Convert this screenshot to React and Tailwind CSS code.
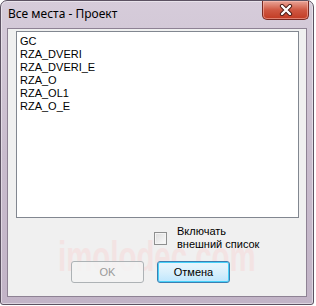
export default function App() {
  const items = ["GC", "RZA_DVERI", "RZA_DVERI_E", "RZA_O", "RZA_OL1", "RZA_O_E"];
  const ms = { fontFamily: '"Liberation Sans", Arial, sans-serif' };
  return (
    <div className="w-[316px] h-[306px] bg-white relative overflow-hidden">
      <div className="w-[314px] h-[305px] rounded-t-[7px] rounded-b-[3px] border border-[#5c5262] bg-linear-to-b from-[#d6ccda] via-[#c9bccd] to-[#c2b4c7] flex flex-col shadow-[inset_0_0_0_1px_rgba(255,255,255,0.45)]">
        <div className="h-[27px] flex justify-between items-start shrink-0">
          <div
            className="pl-[7px] pt-[5px] text-[12px] leading-[15px] text-black"
            style={{ fontFamily: '"Noto Sans", "Open Sans", sans-serif' }}
          >
            Все места - Проект
          </div>
          <div className="mr-[4px] w-[47px] h-[19px] rounded-b-[5px] border border-t-0 border-[#7a2a22] bg-linear-to-b from-[#e8a497] via-[#cf5742] to-[#c23a22] flex items-center justify-center shadow-[inset_0_0_0_1px_rgba(255,200,190,0.5)]">
            <svg width="14" height="12" viewBox="0 0 14 12">
              <path d="M3 2 L11 10 M11 2 L3 10" stroke="#4a1a14" strokeWidth="4.2" strokeLinecap="round" />
              <path d="M3 2 L11 10 M11 2 L3 10" stroke="#ffffff" strokeWidth="2.4" strokeLinecap="round" />
            </svg>
          </div>
        </div>
        <div className="mx-[6px] h-[269px] border border-[#8e8294] bg-[#f0f0f0] flex flex-col relative">
          <div
            className="absolute left-[50px] top-[206px] text-[42px] font-bold leading-[44px] text-[#f6dcdc] opacity-60 pointer-events-none whitespace-nowrap origin-left scale-x-[0.7]"
            style={ms}
          >
            imolodec.com
          </div>
          <div className="pl-[8px] pt-[2px] relative">
            <div className="w-[283px] h-[187px] bg-white border border-[#828790] pl-[3px] pt-[3px]" style={ms}>
              {items.map((t) => (
                <div key={t} className="text-[11px] leading-[13px] text-black">{t}</div>
              ))}
            </div>
          </div>
          <div className="flex items-center gap-[10px] ml-[146px] mt-[7px] relative" style={ms}>
            <div className="w-[13px] h-[13px] border border-[#8e8f8f] bg-linear-to-br from-[#dcdcdc] to-[#fbfbfb] shadow-[inset_0_0_0_1px_#f4f4f4]" />
            <div className="text-[11px] leading-[13px] text-black">
              <div>Включать</div>
              <div>внешний список</div>
            </div>
          </div>
          <div className="flex gap-[13px] ml-[63px] mt-[10px] relative" style={ms}>
            <div className="w-[73px] h-[22px] rounded-[3px] border border-[#adb2b5] bg-[#f4f4f4]/80 flex items-center justify-center text-[11px] text-[#9a9a9a]">
              OK
            </div>
            <div className="w-[73px] h-[22px] rounded-[3px] border border-[#3c7fb1] bg-linear-to-b from-[#eaf6fd] via-[#d9f0fc] to-[#bee6fd] flex items-center justify-center text-[11px] text-black shadow-[inset_0_0_0_1px_#48d1f9]">
              Отмена
            </div>
          </div>
        </div>
      </div>
    </div>
  );
}
